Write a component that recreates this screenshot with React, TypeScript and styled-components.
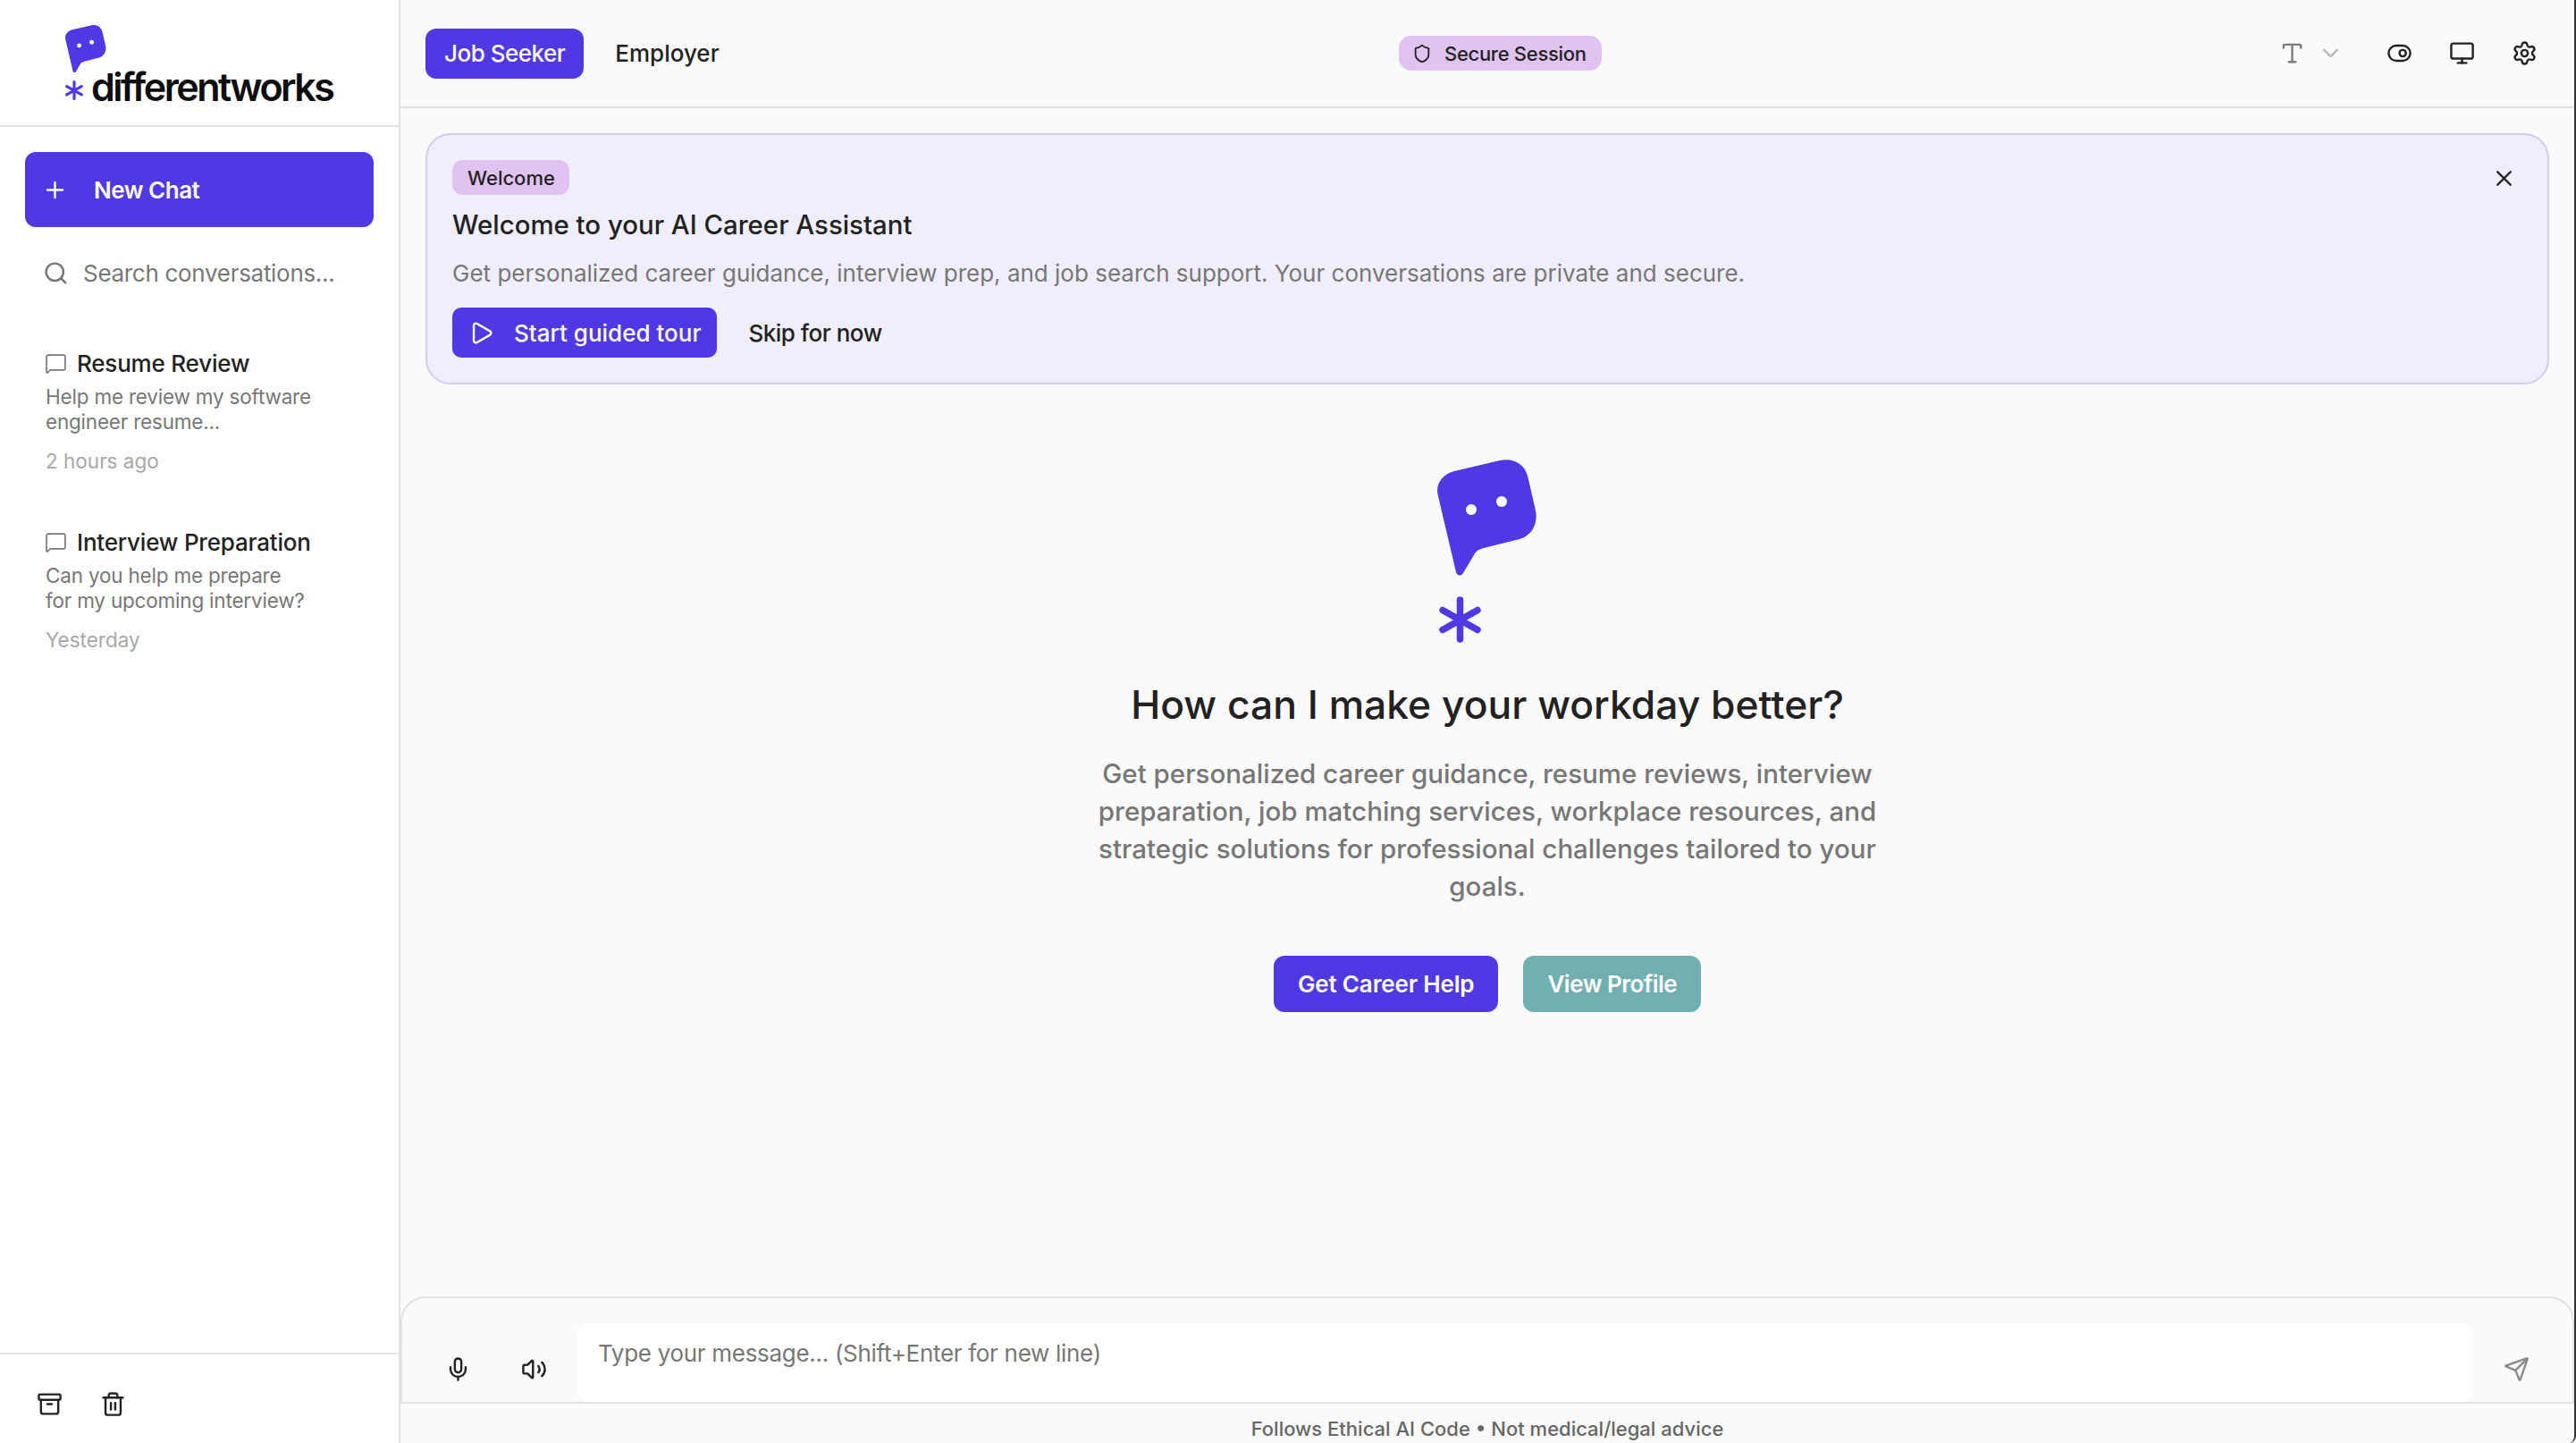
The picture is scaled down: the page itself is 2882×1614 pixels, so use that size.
import styled, { createGlobalStyle } from "styled-components";
import {
  Archive,
  ChevronDown,
  MessageSquare,
  Mic,
  Monitor,
  Play,
  Plus,
  Search,
  Send,
  Settings,
  Shield,
  ToggleRight,
  Trash2,
  Type,
  Volume2,
  X,
} from "lucide-react";

const primary = "#5038e4";

const GlobalStyle = createGlobalStyle`
  html, body {
    margin: 0;
    padding: 0;
    background: #fafafa;
  }
  * {
    box-sizing: border-box;
  }
  body {
    font-family: Inter, "Noto Sans", sans-serif;
    color: #222;
  }
`;

const Page = styled.div`
  display: flex;
  width: 2882px;
  height: 1614px;
  overflow: hidden;
  border-right: 2px solid #333;
  border-bottom-right-radius: 8px;
`;

const Sidebar = styled.aside`
  display: flex;
  flex-direction: column;
  width: 448px;
  flex-shrink: 0;
  background: #fff;
  border-right: 2px solid #e2e2e2;
`;

const LogoBar = styled.div`
  display: flex;
  flex-direction: column;
  height: 142px;
  padding: 28px 0 0 73px;
  border-bottom: 2px solid #e2e2e2;
`;

const LogoRow = styled.div`
  display: flex;
  align-items: flex-end;
  gap: 9px;
  margin-top: -2px;
  & > svg {
    margin-bottom: 3px;
  }
`;

const LogoText = styled.span`
  font-size: 43px;
  line-height: 36px;
  font-weight: 600;
  letter-spacing: -2.5px;
  color: #0d0d0d;
`;

const NewChatButton = styled.button`
  display: flex;
  align-items: center;
  gap: 29px;
  height: 84px;
  margin: 28px 28px 0;
  padding: 0 0 0 19px;
  border: none;
  border-radius: 12px;
  background: ${primary};
  color: #fff;
  font-family: inherit;
  font-size: 26px;
  font-weight: 600;
  letter-spacing: -0.5px;
`;

const SearchRow = styled.div`
  display: flex;
  align-items: center;
  gap: 16px;
  margin: 37px 0 0 48px;
  height: 28px;
  color: #777;
  font-size: 26px;
  letter-spacing: -0.3px;
`;

const ChatList = styled.div`
  display: flex;
  flex-direction: column;
  gap: 60px;
  flex: 1;
  padding: 71px 0 0 51px;
`;

const ChatItem = styled.div`
  display: flex;
  flex-direction: column;
`;

const ChatTitleRow = styled.div`
  display: flex;
  align-items: center;
  gap: 11px;
  height: 32px;
  margin-left: -1px;
  font-size: 26px;
  font-weight: 500;
  letter-spacing: -0.2px;
  color: #222;
`;

const ChatPreview = styled.div`
  margin-top: 8px;
  font-size: 22.5px;
  line-height: 28px;
  letter-spacing: -0.2px;
  color: #777;
`;

const ChatTime = styled.div`
  margin-top: 16px;
  font-size: 22.5px;
  line-height: 28px;
  color: #a8a8a8;
`;

const SidebarFooter = styled.div`
  display: flex;
  align-items: flex-start;
  gap: 42px;
  height: 101px;
  padding: 41px 0 0 41px;
  border-top: 2px solid #e2e2e2;
  color: #222;
`;

const Main = styled.main`
  display: flex;
  flex-direction: column;
  flex: 1;
  min-width: 0;
`;

const TopBar = styled.header`
  display: flex;
  align-items: center;
  justify-content: space-between;
  height: 121px;
  padding: 0 41px 0 28px;
  border-bottom: 2px solid #e2e2e2;
`;

const RoleGroup = styled.div`
  display: flex;
  align-items: center;
  gap: 35px;
  width: 1089px;
`;

const RoleTab = styled.div<{ $active?: boolean }>`
  display: flex;
  align-items: center;
  height: 56px;
  padding: ${(p) => (p.$active ? "0 21px" : "0")};
  border-radius: 12px;
  background: ${(p) => (p.$active ? primary : "transparent")};
  color: ${(p) => (p.$active ? "#fff" : "#222")};
  font-size: 26px;
  font-weight: 500;
  letter-spacing: ${(p) => (p.$active ? "-0.5px" : "0")};
`;

const SecureBadge = styled.div`
  display: flex;
  align-items: center;
  gap: 14px;
  height: 39px;
  padding: 0 17px 0 15px;
  border-radius: 14px;
  background: #e0c3f1;
  font-size: 22px;
  font-weight: 500;
  letter-spacing: -0.3px;
`;

const TopActions = styled.div`
  display: flex;
  align-items: center;
  margin-left: auto;
  color: #222;
`;

const FontPicker = styled.div`
  display: flex;
  align-items: center;
  gap: 14px;
  margin-right: 48px;
  color: #7c7c7c;
`;

const IconGroup = styled.div`
  display: flex;
  align-items: center;
  gap: 41px;
`;

const Body = styled.div`
  display: flex;
  flex-direction: column;
  align-items: center;
  flex: 1;
  padding: 28px 28px 0;
`;

const WelcomeCard = styled.section`
  position: relative;
  display: flex;
  flex-direction: column;
  align-items: flex-start;
  width: 100%;
  height: 281px;
  padding: 28px 28px 0;
  border: 2px solid #d0ccf2;
  border-radius: 28px;
  background: #f0eefa;
`;

const CloseButton = styled.div`
  position: absolute;
  top: 34px;
  right: 34px;
  display: flex;
  color: #222;
`;

const WelcomeBadge = styled.div`
  display: flex;
  align-items: center;
  height: 39px;
  padding: 0 16px 0 17px;
  border-radius: 12px;
  background: #e0c3f1;
  font-size: 22px;
  font-weight: 500;
`;

const WelcomeTitle = styled.h2`
  margin: 14px 0 0;
  font-size: 29.4px;
  line-height: 40px;
  font-weight: 500;
  color: #222;
`;

const WelcomeText = styled.p`
  margin: 15px 0 0;
  font-size: 26px;
  line-height: 38px;
  color: #777;
`;

const TourRow = styled.div`
  display: flex;
  align-items: center;
  gap: 35px;
  margin-top: 19px;
`;

const TourButton = styled.button`
  display: flex;
  align-items: center;
  gap: 22px;
  height: 56px;
  padding: 0 18px 0 18px;
  border: none;
  border-radius: 10px;
  background: ${primary};
  color: #fff;
  font-family: inherit;
  font-size: 26px;
  font-weight: 500;
`;

const SkipButton = styled.div`
  font-size: 26px;
  font-weight: 500;
  letter-spacing: -0.5px;
  color: #222;
`;

const Hero = styled.div`
  display: flex;
  flex-direction: column;
  align-items: center;
  margin-top: 84px;
`;

const HeroLogo = styled.div`
  display: flex;
  flex-direction: column;
  align-items: flex-start;
  gap: 23px;
  width: 112px;
  & > svg:last-child {
    margin-left: 2px;
  }
`;

const HeroTitle = styled.h1`
  margin: 37px 0 0;
  font-size: 44.4px;
  line-height: 64px;
  font-weight: 500;
  color: #222;
`;

const HeroText = styled.p`
  width: 890px;
  margin: 24px 0 0;
  font-size: 29.5px;
  line-height: 42px;
  font-weight: 500;
  color: #777;
  text-align: center;
`;

const HeroActions = styled.div`
  display: flex;
  gap: 28px;
  margin-top: 57px;
`;

const HeroButton = styled.button<{ $teal?: boolean }>`
  height: 63px;
  padding: 0 27px;
  border: none;
  border-radius: 12px;
  background: ${(p) => (p.$teal ? "#71b0b2" : primary)};
  color: #fff;
  font-family: inherit;
  font-size: 26px;
  font-weight: 600;
  letter-spacing: ${(p) => (p.$teal ? "-0.5px" : "-0.15px")};
`;

const Composer = styled.div`
  display: flex;
  align-items: flex-end;
  height: 120px;
  margin-top: auto;
  padding: 0 48px 22px 48px;
  border: 2px solid #e2e2e2;
  border-radius: 28px 28px 0 0;
  background: #fafafa;
  color: #222;
`;

const ComposerIcons = styled.div`
  display: flex;
  align-items: center;
  gap: 56px;
  margin-right: 33px;
`;

const MessageBox = styled.div`
  flex: 1;
  align-self: stretch;
  margin: 28px 35px -22px 0;
  padding: 16px 24px;
  border-radius: 14px;
  background: #fff;
  font-size: 26px;
  line-height: 36px;
  letter-spacing: -0.3px;
  color: #777;
`;

const SendIcon = styled.div`
  display: flex;
  color: #8a8a8a;
`;

const FooterNote = styled.div`
  display: flex;
  align-items: center;
  justify-content: center;
  height: 44px;
  padding-top: 12px;
  font-size: 22px;
  font-weight: 500;
  color: #666;
`;

function BubbleMark({ width }: { width: number }) {
  return (
    <svg width={width} viewBox="0 0 112 130" fill="none">
      <path
        d="M1 41C-3 28 6 16 19 13L70 1C84 -2 97 4 101 18L110 57C113 71 106 85 92 89L52 99C47 100 44 102 42 105L29 127C26 131 22 130 21 126Z"
        fill={primary}
      />
      <circle cx="38" cy="56" r="6" fill="#fff" />
      <circle cx="72" cy="47" r="6" fill="#fff" />
    </svg>
  );
}

function Asterisk({ width }: { width: number }) {
  return (
    <svg width={width} viewBox="0 0 47 52" fill="none" stroke={primary} strokeWidth="7.5" strokeLinecap="round">
      <path d="M23.5 4V48M4 15.500L43 37.500M43 15.500L4 37.500" />
    </svg>
  );
}

export default function App() {
  return (
    <Page>
      <GlobalStyle />
      <Sidebar>
        <LogoBar>
          <BubbleMark width={46} />
          <LogoRow>
            <Asterisk width={20} />
            <LogoText>differentworks</LogoText>
          </LogoRow>
        </LogoBar>
        <NewChatButton>
          <Plus size={29} />
          New Chat
        </NewChatButton>
        <SearchRow>
          <Search size={29} />
          Search conversations...
        </SearchRow>
        <ChatList>
          <ChatItem>
            <ChatTitleRow>
              <MessageSquare size={25} color="#777" strokeWidth={1.6} />
              Resume Review
            </ChatTitleRow>
            <ChatPreview>
              Help me review my software
              <br />
              engineer resume...
            </ChatPreview>
            <ChatTime>2 hours ago</ChatTime>
          </ChatItem>
          <ChatItem>
            <ChatTitleRow>
              <MessageSquare size={25} color="#777" strokeWidth={1.6} />
              Interview Preparation
            </ChatTitleRow>
            <ChatPreview>
              Can you help me prepare
              <br />
              for my upcoming interview?
            </ChatPreview>
            <ChatTime>Yesterday</ChatTime>
          </ChatItem>
        </ChatList>
        <SidebarFooter>
          <Archive size={29} />
          <Trash2 size={29} />
        </SidebarFooter>
      </Sidebar>
      <Main>
        <TopBar>
          <RoleGroup>
            <RoleTab $active>Job Seeker</RoleTab>
            <RoleTab>Employer</RoleTab>
          </RoleGroup>
          <SecureBadge>
            <Shield size={22} />
            Secure Session
          </SecureBadge>
          <TopActions>
            <FontPicker>
              <Type size={29} />
              <ChevronDown size={29} color="#bbb" />
            </FontPicker>
            <IconGroup>
              <ToggleRight size={29} />
              <Monitor size={29} />
              <Settings size={29} />
            </IconGroup>
          </TopActions>
        </TopBar>
        <Body>
          <WelcomeCard>
            <CloseButton>
              <X size={29} />
            </CloseButton>
            <WelcomeBadge>Welcome</WelcomeBadge>
            <WelcomeTitle>Welcome to your AI Career Assistant</WelcomeTitle>
            <WelcomeText>
              Get personalized career guidance, interview prep, and job search support. Your conversations are private and secure.
            </WelcomeText>
            <TourRow>
              <TourButton>
                <Play size={29} />
                Start guided tour
              </TourButton>
              <SkipButton>Skip for now</SkipButton>
            </TourRow>
          </WelcomeCard>
          <Hero>
            <HeroLogo>
              <BubbleMark width={112} />
              <Asterisk width={47} />
            </HeroLogo>
            <HeroTitle>How can I make your workday better?</HeroTitle>
            <HeroText>
              Get personalized career guidance, resume reviews, interview preparation, job matching services, workplace resources, and strategic solutions for professional challenges tailored to your goals.
            </HeroText>
            <HeroActions>
              <HeroButton>Get Career Help</HeroButton>
              <HeroButton $teal>View Profile</HeroButton>
            </HeroActions>
          </Hero>
        </Body>
        <Composer>
          <ComposerIcons>
            <Mic size={29} />
            <Volume2 size={29} />
          </ComposerIcons>
          <MessageBox>Type your message... (Shift+Enter for new line)</MessageBox>
          <SendIcon>
            <Send size={29} />
          </SendIcon>
        </Composer>
        <FooterNote>Follows Ethical AI Code • Not medical/legal advice</FooterNote>
      </Main>
    </Page>
  );
}
